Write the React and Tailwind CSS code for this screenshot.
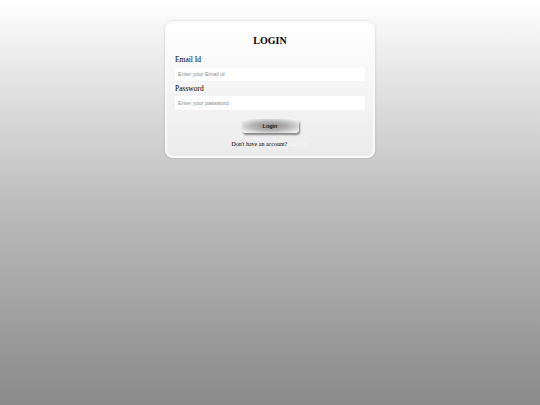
import { useState } from "react";

const App = () => {
    const [email, setEmail] = useState("");
    const [password, setPassword] = useState("");

    return (
        <div className="min-h-screen w-full bg-gradient-to-b from-white via-[#bdbdbd] to-[#8a8a8a] pt-[21px] font-['Liberation_Serif',serif]">
            {/* Login card */}
            <div className="mx-auto w-[210px] h-[137px] rounded-[8px] border-2 border-[#fafafa] bg-gradient-to-b from-white to-[#ebebeb] shadow-[0_0_3px_rgba(0,0,0,0.15)] px-[8px] pt-[11px]">
                <h1 className="text-center text-[10px] leading-[13px] font-bold text-black">
                    LOGIN
                </h1>
                <label className="mt-[8px] block text-[7.5px] leading-[10px] text-black">
                    Email Id
                </label>
                <input
                    type="email"
                    value={email}
                    onChange={(e) => setEmail(e.target.value)}
                    placeholder="Enter your Email id"
                    className="mt-[2px] block h-[14px] w-full rounded-[2px] bg-white pl-[3px] text-[5.5px] font-['Liberation_Sans',sans-serif] outline-none placeholder:text-[#8a8a8a]"
                />
                <label className="mt-[3px] block text-[7.5px] leading-[10px] text-black">
                    Password
                </label>
                <input
                    type="password"
                    value={password}
                    onChange={(e) => setPassword(e.target.value)}
                    placeholder="Enter your password"
                    className="mt-[2px] block h-[14px] w-full rounded-[2px] bg-white pl-[3px] text-[5.5px] font-['Liberation_Sans',sans-serif] outline-none placeholder:text-[#8a8a8a]"
                />
                <div className="mt-[9px] flex justify-center">
                    <button className="h-[14px] w-[57px] rounded-[4px] bg-[radial-gradient(ellipse_at_center,#8c8c8c_0%,#b5b5b5_45%,#f4f4f4_90%)] text-[5.5px] font-bold font-['Liberation_Sans',sans-serif] text-[#222] shadow-[1px_2px_2px_rgba(0,0,0,0.45)]">
                        Login
                    </button>
                </div>
                <p className="mt-[6px] text-center text-[6px] leading-[10px] text-black">
                    Don't have an account?{" "}
                    <span className="text-[#fbfbfb]">Sign Up</span>
                </p>
            </div>
        </div>
    );
};

export default App;
